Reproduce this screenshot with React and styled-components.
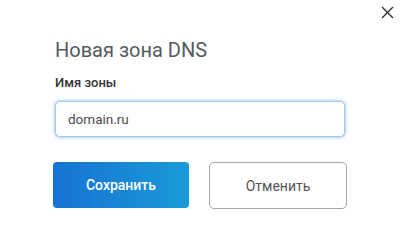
import React from "react";
import styled, { createGlobalStyle } from "styled-components";

const Global = createGlobalStyle`
  html, body { margin: 0; padding: 0; background: #fff; }
  body { font-family: Roboto, "Noto Sans", Arial, sans-serif; }
  * { box-sizing: border-box; }
`;

const Dialog = styled.div`
  width: 406px;
  height: 249px;
  background: #fff;
  display: flex;
  flex-direction: column;
`;

const TopBar = styled.div`
  display: flex;
  justify-content: flex-end;
  padding: 6px 12px 0 0;
  height: 38px;
`;

const CloseButton = styled.button`
  width: 13px;
  height: 13px;
  padding: 0;
  border: none;
  background: none;
  cursor: pointer;
  display: flex;
  color: #2a2a2a;
`;

const Content = styled.div`
  padding-left: 53px;
  display: flex;
  flex-direction: column;
`;

const Fields = styled.div`
  padding-left: 2px;
  display: flex;
  flex-direction: column;
`;

const Title = styled.h2`
  margin: 0;
  font-size: 20px;
  line-height: 24px;
  font-weight: 400;
  color: #555a60;
`;

const Label = styled.label`
  margin-top: 13px;
  font-size: 13px;
  line-height: 16px;
  font-weight: 500;
  color: #333639;
`;

const Input = styled.input`
  margin-top: 10px;
  width: 290px;
  height: 36px;
  padding: 0 12px;
  border: 1px solid #9dc8ef;
  border-radius: 5px;
  box-shadow: 0 0 3px 1px rgba(90, 160, 230, 0.45);
  font-family: Roboto, Arial, sans-serif;
  font-size: 13.5px;
  color: #474b50;
  outline: none;
  caret-color: #222;
`;

const Buttons = styled.div`
  margin-top: 25px;
  display: flex;
  gap: 20px;
`;

const Button = styled.button`
  width: ${(p) => (p.$primary ? "136px" : "138px")};
  height: ${(p) => (p.$primary ? "46px" : "47px")};
  border-radius: ${(p) => (p.$primary ? "4px" : "5px")};
  font-family: Roboto, Arial, sans-serif;
  font-size: 14px;
  font-weight: ${(p) => (p.$primary ? 500 : 400)};
  cursor: pointer;
  color: ${(p) => (p.$primary ? "#fff" : "#52565b")};
  border: ${(p) => (p.$primary ? "none" : "1px solid #a3a6aa")};
  background: ${(p) =>
    p.$primary ? "linear-gradient(90deg, #1673d3 0%, #1a9ad8 100%)" : "#fff"};
`;

export default function App() {
  return (
    <>
      <Global />
      <Dialog>
        <TopBar>
          <CloseButton aria-label="Закрыть">
            <svg width="13" height="13" viewBox="0 0 13 13">
              <path
                d="M1 1 L12 12 M12 1 L1 12"
                stroke="currentColor"
                strokeWidth="1.3"
                fill="none"
              />
            </svg>
          </CloseButton>
        </TopBar>
        <Content>
          <Fields>
            <Title>Новая зона DNS</Title>
            <Label htmlFor="zone">Имя зоны</Label>
            <Input id="zone" defaultValue="domain.ru" autoFocus />
          </Fields>
          <Buttons>
            <Button $primary>Сохранить</Button>
            <Button>Отменить</Button>
          </Buttons>
        </Content>
      </Dialog>
    </>
  );
}
